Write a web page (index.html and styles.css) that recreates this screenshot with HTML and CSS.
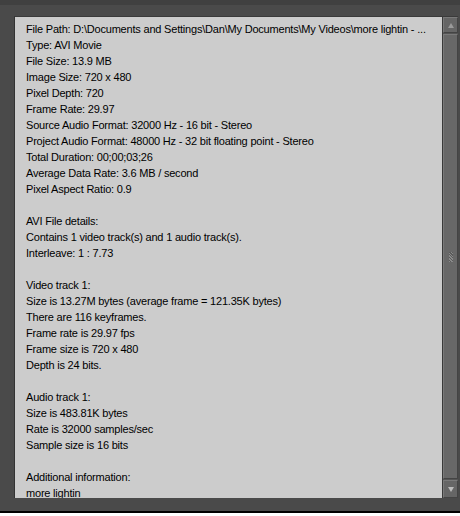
FILE: index.html
```html
<!DOCTYPE html>
<html lang="en">
<head>
    <meta charset="UTF-8">
    <title>Properties</title>
    <link rel="stylesheet" href="styles.css">
</head>
<body>
    <div class="topband"></div>
    <div class="frame">
        <div class="panel">
            <div class="info">
                <div>File Path: D:\Documents and Settings\Dan\My Documents\My Videos\more lightin - ...</div>
                <div>Type: AVI Movie</div>
                <div>File Size: 13.9 MB</div>
                <div>Image Size: 720 x 480</div>
                <div>Pixel Depth: 720</div>
                <div>Frame Rate: 29.97</div>
                <div>Source Audio Format: 32000 Hz - 16 bit - Stereo</div>
                <div>Project Audio Format: 48000 Hz - 32 bit floating point - Stereo</div>
                <div>Total Duration: 00;00;03;26</div>
                <div>Average Data Rate: 3.6 MB / second</div>
                <div>Pixel Aspect Ratio: 0.9</div>
                <div class="blank"></div>
                <div>AVI File details:</div>
                <div>Contains 1 video track(s) and 1 audio track(s).</div>
                <div>Interleave: 1 : 7.73</div>
                <div class="blank"></div>
                <div>Video track 1:</div>
                <div>Size is 13.27M bytes (average frame = 121.35K bytes)</div>
                <div>There are 116 keyframes.</div>
                <div>Frame rate is 29.97 fps</div>
                <div>Frame size is 720 x 480</div>
                <div>Depth is 24 bits.</div>
                <div class="blank"></div>
                <div>Audio track 1:</div>
                <div>Size is 483.81K bytes</div>
                <div>Rate is 32000 samples/sec</div>
                <div>Sample size is 16 bits</div>
                <div class="blank"></div>
                <div>Additional information:</div>
                <div>more lightin</div>
                <div class="blank"></div>
            </div>
            <div class="scrollbar">
                <div class="arrow up"><span></span></div>
                <div class="thumb"><div class="grip"></div></div>
                <div class="arrow down"><span></span></div>
            </div>
        </div>
    </div>
    <div class="footer"></div>
</body>
</html>
```

FILE: styles.css
```css
html, body {
    margin: 0;
    padding: 0;
}

body {
    width: 460px;
    height: 516px;
    overflow: hidden;
    background-color: #4a4a4a;
    font-family: "Liberation Sans", Arial, sans-serif;
}

.topband {
    height: 5px;
    background-color: #404040;
}

.frame {
    padding: 11px 2px 0 14px;
}

.panel {
    display: flex;
    height: 482px;
    border-left: 1px solid #333333;
    border-top: 1px solid #3a3a3a;
    box-sizing: border-box;
}

.info {
    flex: 1;
    background-color: #cccccc;
    padding: 4px 0 0 11px;
    overflow: hidden;
    color: #000000;
    font-size: 11px;
    letter-spacing: -0.2px;
    line-height: 16px;
    white-space: nowrap;
}

.blank {
    height: 16px;
}

.scrollbar {
    width: 15px;
    display: flex;
    flex-direction: column;
    background-color: #555555;
    border-left: 1px solid #3a3a3a;
}

.arrow {
    height: 16px;
    background-color: #666666;
    border: 1px solid #7a7a7a;
    border-right-color: #444444;
    border-bottom-color: #444444;
    box-sizing: border-box;
    display: flex;
    align-items: center;
    justify-content: center;
}

.arrow span {
    width: 0;
    height: 0;
    border-left: 3px solid transparent;
    border-right: 3px solid transparent;
}

.arrow.up span {
    border-bottom: 5px solid #9a9a9a;
}

.arrow.down span {
    border-top: 5px solid #bcbcbc;
}

.arrow.down {
    height: 18px;
}

.thumb {
    flex: 1;
    margin: 1px 0;
    background-color: #686868;
    border: 1px solid #7a7a7a;
    border-right-color: #444444;
    border-bottom-color: #444444;
    display: flex;
    align-items: center;
    justify-content: center;
}

.grip {
    width: 4px;
    height: 10px;
    background-image: repeating-linear-gradient(45deg, #8a8a8a 0 1px, #5a5a5a 1px 2px);
}

.footer {
    margin-top: 13px;
    height: 2px;
    background-color: #000000;
    border-bottom: 3px solid #ffffff;
}
```
